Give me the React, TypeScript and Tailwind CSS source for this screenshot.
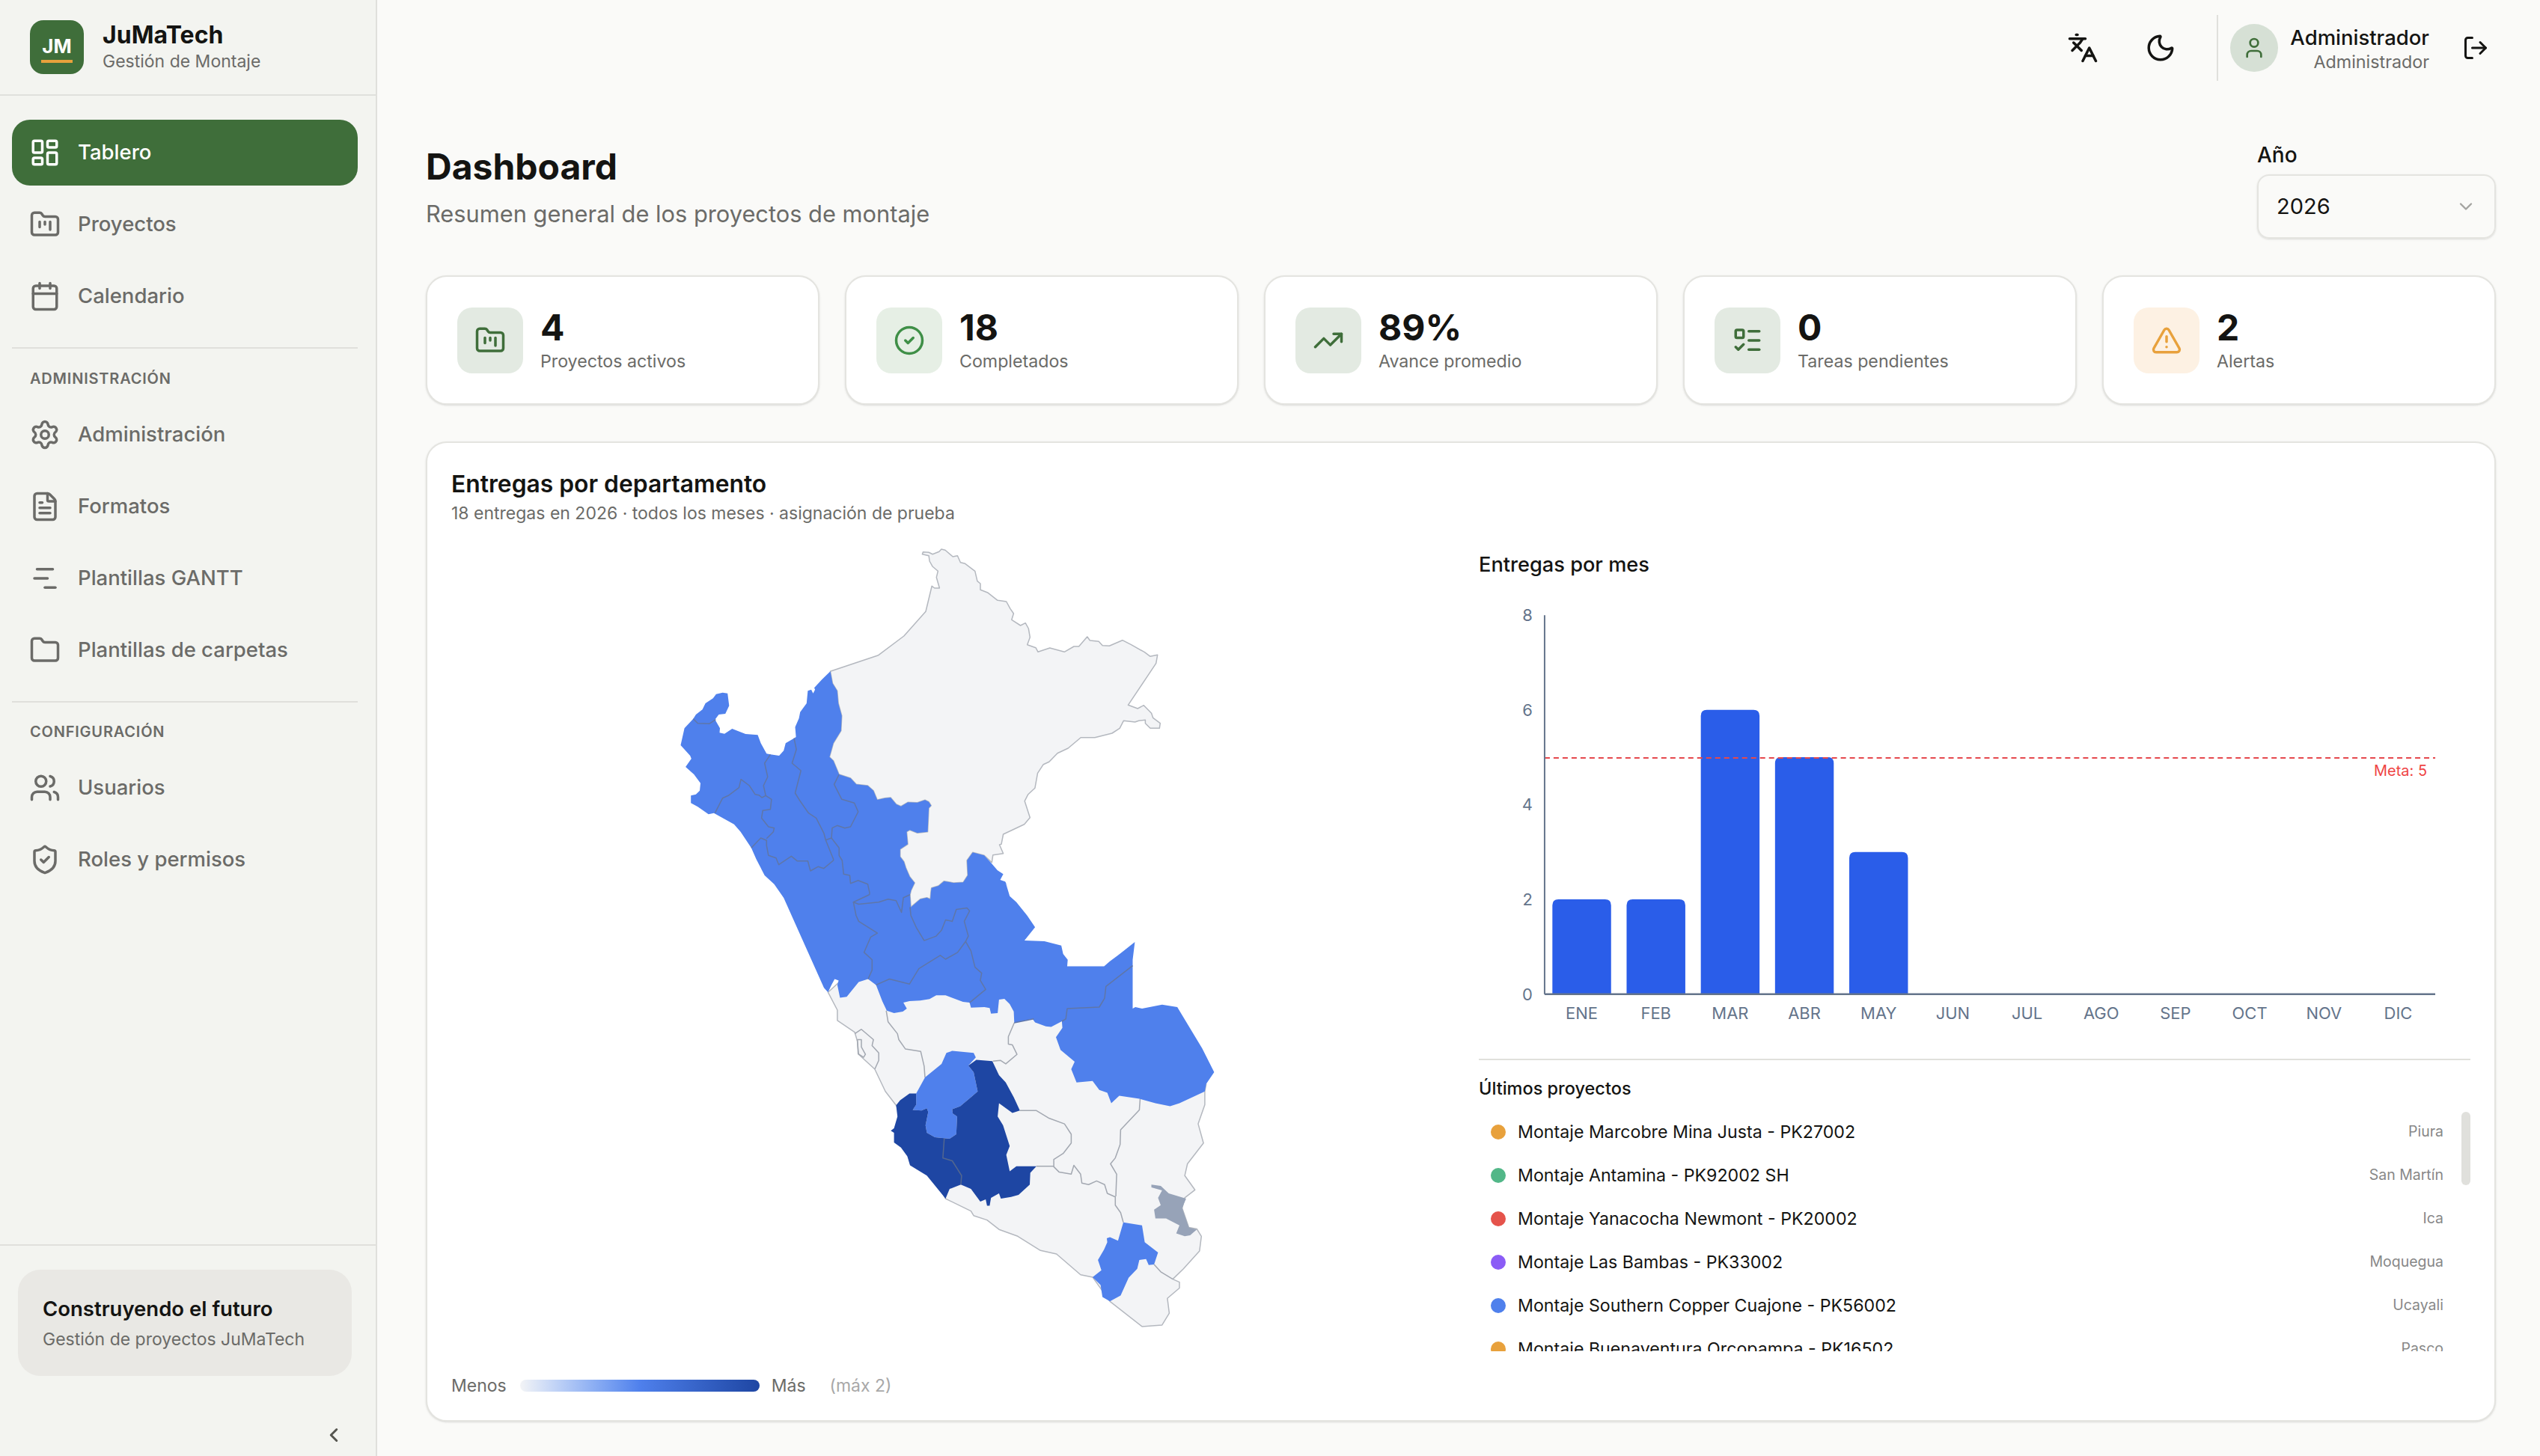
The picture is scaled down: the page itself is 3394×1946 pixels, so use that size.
import {
  Calendar,
  ChartNoAxesGantt,
  ChevronDown,
  ChevronLeft,
  CircleCheck,
  FileText,
  Folder,
  FolderKanban,
  Languages,
  LayoutDashboard,
  ListTodo,
  LogOut,
  Moon,
  Settings,
  ShieldCheck,
  TrendingUp,
  TriangleAlert,
  User,
  Users,
} from "lucide-react"

// the map was traced from two crops, so points come in two scales
type Seg = [7 | 8, string]

const toPage = (segs: Seg[], close = true) => {
  const pts: string[] = []
  for (const [z, str] of segs) {
    for (const p of str.trim().split(/\s+/)) {
      const [a, b] = p.split(",").map(Number)
      const x = z === 7 ? 860 + a / 1.96 : 1100 + a / 2.8
      const y = z === 7 ? 700 + b / 3 : 1180 + b / 2.53
      pts.push(`${x.toFixed(1)} ${y.toFixed(1)}`)
    }
  }
  return "M" + pts.join("L") + (close ? "Z" : "")
}

const LORETO: Seg[] = [
  [7, "487,592 613,527 680,450 737,352 753,250 760,258 773,258 765,215 769,190 755,172 747,150 745,128 728,122 730,113 745,115 755,122 772,112 778,102 788,106 808,132 820,128 828,155 840,160 866,190 872,230 880,240 880,265 900,277 925,307 948,312 958,340 967,360 962,385 985,408 998,398 1006,420 1010,455 1003,485 1025,497 1031,514 1062,498 1100,514 1125,492 1138,492 1160,453 1167,468 1190,472 1200,488 1218,490 1252,467 1275,485 1310,515 1325,532 1344,526 1340,560 1267,727 1292,741 1308,728 1328,760 1332,778 1351,800 1349,820 1325,820 1312,800 1312,787 1295,790 1285,795 1255,790 1245,820 1225,840 1180,857 1143,857 1110,900 1082,920 1060,955 1045,965 1030,1000 1023,1060 1005,1085 996,1112 1010,1178 995,1205 940,1245 935,1285 930,1287 940,1322 913,1328 910,1358 890,1330 860,1318 845,1350 847,1410 835,1438 810,1440 785,1433 770,1452 752,1460"],
  [8, "400,30 398,55 385,50 360,55 325,82 322,40 330,10"],
  [7, "697,1475 708,1440 695,1415 685,1380 680,1355 670,1335 670,1305 690,1285 687,1235 695,1228 715,1240 742,1235 745,1140 751,1130 745,1115 735,1108 715,1118 690,1117 672,1133 660,1125 645,1098 630,1100 610,1107 600,1070 585,1050 555,1045 540,1020 510,1005 495,950 485,935 495,880 515,830 517,770 508,720 505,670 493,640"],
]

const SOUTH: Seg[] = [
  [8, "15,370 50,430 50,465 115,505 125,535 130,580 190,630 230,705 270,752 455,1068 550,1110 560,1125 610,1140 655,1172 725,1195 810,1243 870,1255 960,1325 1005,1333 1070,1415 1190,1500 1265,1495 1292,1455 1285,1405 1330,1370 1330,1350 1305,1340 1345,1305 1405,1245 1412,1195 1395,1170 1365,1165 1340,1100 1350,1065 1388,1038 1350,990 1360,950 1420,880 1400,815 1425,750 1425,705 1430,680 1300,600 800,300 300,300 100,300"],
]

const NORTH_BLUE: Seg[] = [
  [7, "487,592 465,625 445,658 447,665 442,680 437,665 428,670 425,720 408,755 405,780 395,815 397,855 392,860 370,880 365,910 353,930 330,925 320,922 305,880 297,847 265,843 230,822 210,842 197,838 198,820 185,785 195,765 212,762 222,730 218,680 205,677 188,683 180,700 160,720 152,745 135,765 128,782 105,820 95,888 120,930 123,942 108,975 130,1005 147,1040 145,1070 135,1085 122,1090 122,1120 140,1135 168,1165 182,1160 235,1205 252,1235 280,1300 293,1345 315,1410 340,1445 365,1500"],
  [8, "0,355 15,370 28,345 40,325 55,330 50,345 60,388 85,385 130,335 165,325 195,345 218,400 235,432 262,440 295,435 310,425 297,405 320,400 360,398 395,393 420,380 455,380 520,402 545,405 550,422 600,420 620,423 625,442 650,440 655,395 675,392 695,410 710,435 712,473 780,460 790,472 830,485 850,487 890,468 892,490 868,522 885,565 938,605 925,630 945,675 1005,670 1030,700 1060,710 1075,745 1105,720 1180,730 1240,745 1295,755 1330,745 1425,705 1430,680 1460,640 1415,560 1322,420 1265,412 1190,425 1165,420 1155,425 1155,260 1163,200 1100,245 1070,265 1048,282 910,282 912,260 895,240 888,212 825,197 750,195 790,150 760,110 720,65 695,45 680,0"],
  [7, "955,1460 945,1435 932,1428 940,1405 925,1390 908,1360 890,1330 860,1318 845,1350 847,1410 835,1438 810,1440 785,1433 770,1452 752,1460"],
  [8, "400,30 398,55 385,50 360,55 325,82 322,40 330,10"],
  [7, "697,1475 708,1440 695,1415 685,1380 680,1355 670,1335 670,1305 690,1285 687,1235 695,1228 715,1240 742,1235 745,1140 751,1130 745,1115 735,1108 715,1118 690,1117 672,1133 660,1125 645,1098 630,1100 610,1107 600,1070 585,1050 555,1045 540,1020 510,1005 495,950 485,935 495,880 515,830 517,770 508,720 505,670 493,640"],
]

const MID_BLUE: Seg[] = [
  [8, "378,658 440,612 458,575 480,568 560,575 568,590 540,618 560,640 575,705 550,725 510,755 480,765 482,780 498,790 495,850 470,865 415,860 385,845 380,820 390,775 385,762 365,770 332,768 345,750 345,712"],
]

const DARK: Seg[] = [
  [8, "270,752 285,735 320,712 345,712 345,750 332,768 365,770 385,762 390,775 380,820 385,845 415,860 470,865 495,850 498,790 482,780 480,765 510,755 550,725 575,705 560,640 540,618 570,598 630,603 655,650 680,675 710,725 733,770 705,778 655,745 650,790 670,820 695,890 682,920 695,975 720,958 795,958 772,980 770,1020 728,1055 700,1062 662,1068 655,1050 625,1065 620,1092 610,1092 605,1070 585,1078 550,1035 512,1020 470,1035 455,1068 430,1040 385,990 322,955 312,925 288,895 262,878 262,845 250,838 262,830 275,790"],
]

const SOUTH_BLUE: Seg[] = [
  [8, "1120,1148 1190,1158 1200,1215 1250,1250 1235,1290 1215,1292 1205,1272 1180,1275 1172,1305 1140,1335 1110,1395 1070,1415 1042,1400 1035,1360 1005,1333 1038,1310 1025,1275 1048,1240 1060,1215 1058,1202 1070,1198 1100,1210"],
]

const GREY: Seg[] = [
  [8, "1225,1020 1260,1025 1290,1050 1355,1068 1340,1100 1365,1165 1395,1172 1370,1192 1350,1195 1318,1185 1330,1158 1280,1135 1240,1135 1235,1105 1260,1090 1250,1065 1265,1040 1225,1030"],
]

const BLUE_LINES: Seg[][] = [
  [[7, "128,782 140,800 170,802 187,785"]],
  [[7, "392,860 398,905 387,960 410,990 395,1080 407,1110 430,1160 450,1180 470,1240 475,1268 495,1345 495,1350 470,1382 455,1375 435,1392 428,1352 400,1352 385,1333 352,1367 345,1340 325,1330 320,1290 320,1270 305,1260 280,1300"]],
  [[7, "330,925 315,960 323,1015 312,1050 318,1090 333,1105 330,1145 310,1150 307,1180 325,1215 340,1220 338,1235 320,1262"]],
  [[7, "318,1090 308,1098 300,1088 290,1085 275,1050 253,1025 248,1058 220,1090 205,1100 185,1160"]],
  [[7, "510,1005 497,1045 517,1105 550,1120 560,1155 540,1215 525,1220 505,1210 492,1220 490,1260 475,1268"]],
  [[7, "490,1260 510,1300 510,1330 518,1350 522,1405 538,1410 540,1442 560,1430 585,1445 590,1480"], [8, "170,40 110,65 130,72 205,65 240,55 270,60 290,100 297,50 322,40"]],
  [[8, "110,65 120,110 130,130 200,170 175,183 150,235 180,260 180,295 165,325"]],
  [[8, "195,345 245,325 320,342 355,290 435,245 455,258 500,235 530,198 540,180 525,130 545,95 535,85 495,90 480,130 455,125 440,160 420,180 375,195 345,150 325,110 322,82"]],
  [[8, "530,198 550,230 565,285 590,305 585,330 605,360 545,405"]],
  [[8, "712,473 785,460"]],
  [[8, "890,468 905,460 910,425 1030,420 1050,390 1055,350 1155,280"]],
]

const LIGHT_LINES: Seg[][] = [
  [[8, "233,432 240,470 275,510 280,530 305,562 362,570 375,620 378,658"]],
  [[8, "712,473 690,520 690,545 705,548 722,580 680,612 660,600 632,603"]],
  [[8, "115,510 140,495 185,530 180,550 205,575 205,600 190,630"]],
  [[8, "125,530 140,530 140,555 155,580 148,590 128,578 125,530"]],
  [[8, "733,770 795,770 840,795 900,815 925,850 925,880 895,915 860,935 860,960 880,978 925,985 935,955 960,985 965,1015 990,1020 1020,1008 1050,1020 1060,1050 1090,1062 1090,1090 1110,1115 1120,1148"]],
  [[8, "860,958 795,958"]],
  [[8, "1183,730 1180,768 1110,835 1108,885 1090,930 1072,950 1095,985 1092,1060"]],
  [[8, "1235,1290 1260,1315 1305,1340"]],
]

function PeruMap() {
  return (
    <svg viewBox="860 720 800 1080" className="mx-auto block h-[1080px] w-[800px]">
      <path d={toPage(SOUTH)} fill="#f3f4f6" stroke="#b4b8bf" strokeWidth="1.5" strokeLinejoin="round" />
      <path d={toPage(LORETO)} fill="#f3f4f6" stroke="#b4b8bf" strokeWidth="1.5" strokeLinejoin="round" />
      {LIGHT_LINES.map((l, i) => (
        <path key={i} d={toPage(l, false)} fill="none" stroke="#a3a8b1" strokeWidth="1.5" strokeLinejoin="round" />
      ))}
      <path d={toPage(NORTH_BLUE)} fill="#4f80ec" />
      <path d={toPage(MID_BLUE)} fill="#4f80ec" />
      <path d={toPage(SOUTH_BLUE)} fill="#4f80ec" />
      <path d={toPage(DARK)} fill="#1e46a3" />
      <path d={toPage(GREY)} fill="#97a3b8" />
      {BLUE_LINES.map((l, i) => (
        <path key={i} d={toPage(l, false)} fill="none" stroke="#5f76a8" strokeWidth="1.5" strokeLinejoin="round" />
      ))}
      <path d={toPage([[8, "450,865 445,930 480,940 515,990 512,1020"]], false)} fill="none" stroke="#53678f" strokeWidth="1.5" />
    </svg>
  )
}

const MONTHS = ["ENE", "FEB", "MAR", "ABR", "MAY", "JUN", "JUL", "AGO", "SEP", "OCT", "NOV", "DIC"]
const DELIVERIES = [2, 2, 6, 5, 3, 0, 0, 0, 0, 0, 0, 0]

function MonthChart() {
  const left = 2064
  const base = 1329
  const step = 99.25
  const unit = 63.4
  return (
    <svg viewBox="1976 790 1326 600" className="block h-[600px] w-full">
      {[0, 2, 4, 6, 8].map((v) => (
        <text key={v} x={2048} y={base - v * unit + 8} textAnchor="end" fontSize="22" fill="#64748b">
          {v}
        </text>
      ))}
      {DELIVERIES.map((v, i) =>
        v > 0 ? (
          <path
            key={i}
            d={`M${left + 10.4 + i * step} ${base}v${-(v * unit - 8)}q0 -8 8 -8h62.5q8 0 8 8v${v * unit - 8}z`}
            fill="#2a5de9"
          />
        ) : null
      )}
      <line x1={left} x2={3255} y1={1013} y2={1013} stroke="#e5484d" strokeWidth="2" strokeDasharray="7 5" />
      <text x={3244} y={1037} textAnchor="end" fontSize="20" fill="#ef4444">
        Meta: 5
      </text>
      <line x1={left} x2={left} y1={822} y2={base} stroke="#64748b" strokeWidth="2" />
      <line x1={left} x2={3255} y1={base} y2={base} stroke="#64748b" strokeWidth="2.5" />
      {MONTHS.map((m, i) => (
        <text key={m} x={left + step / 2 + i * step} y={1362} textAnchor="middle" fontSize="22" fill="#64748b">
          {m}
        </text>
      ))}
    </svg>
  )
}

const NAV_TOP = [
  { label: "Tablero", icon: LayoutDashboard, active: true },
  { label: "Proyectos", icon: FolderKanban },
  { label: "Calendario", icon: Calendar },
]
const NAV_ADMIN = [
  { label: "Administración", icon: Settings },
  { label: "Formatos", icon: FileText },
  { label: "Plantillas GANTT", icon: ChartNoAxesGantt },
  { label: "Plantillas de carpetas", icon: Folder },
]
const NAV_CONFIG = [
  { label: "Usuarios", icon: Users },
  { label: "Roles y permisos", icon: ShieldCheck },
]

function NavItem({ label, icon: Icon, active }: { label: string; icon: typeof Folder; active?: boolean }) {
  return (
    <div
      className={
        active
          ? "flex h-[88px] items-center gap-[23px] rounded-[24px] bg-[#3f6e3a] pl-[23px] text-white"
          : "flex h-[88px] items-center gap-[23px] rounded-[24px] pl-[23px] text-[#6b6b68]"
      }
    >
      <Icon size={42} strokeWidth={2} />
      <span className="text-[27.5px] font-medium">{label}</span>
    </div>
  )
}

const STATS = [
  { value: "4", label: "Proyectos activos", icon: FolderKanban, box: "bg-[#e3eae2]", color: "text-[#3f6e3a]" },
  { value: "18", label: "Completados", icon: CircleCheck, box: "bg-[#e6efe5]", color: "text-[#3f8f47]" },
  { value: "89%", label: "Avance promedio", icon: TrendingUp, box: "bg-[#e3eae2]", color: "text-[#3f6e3a]" },
  { value: "0", label: "Tareas pendientes", icon: ListTodo, box: "bg-[#e3eae2]", color: "text-[#3f6e3a]" },
  { value: "2", label: "Alertas", icon: TriangleAlert, box: "bg-[#fdf1e3]", color: "text-[#e8a13c]" },
]

const PROJECTS = [
  { name: "Montaje Marcobre Mina Justa - PK27002", place: "Piura", dot: "bg-[#e8a13c]" },
  { name: "Montaje Antamina - PK92002 SH", place: "San Martín", dot: "bg-[#52b788]" },
  { name: "Montaje Yanacocha Newmont - PK20002", place: "Ica", dot: "bg-[#e5534b]" },
  { name: "Montaje Las Bambas - PK33002", place: "Moquegua", dot: "bg-[#8b5cf6]" },
  { name: "Montaje Southern Copper Cuajone - PK56002", place: "Ucayali", dot: "bg-[#4f80ec]" },
  { name: "Montaje Buenaventura Orcopampa - PK16502", place: "Pasco", dot: "bg-[#e8a13c]" },
]

export default function App() {
  return (
    <div className="flex h-[1946px] w-[3394px] overflow-hidden bg-[#fafaf8] font-['Inter',sans-serif] text-[#141412]">
      <aside className="flex h-full w-[504px] shrink-0 flex-col border-r-2 border-[#e0e0dc] bg-[#f3f4f0]">
        <div className="flex h-[128px] shrink-0 items-center gap-[25px] border-b-2 border-[#e0e0dc] pl-[40px]">
          <div className="flex h-[72px] w-[72px] flex-col items-center justify-center rounded-[18px] bg-[#3f6e3a] pt-[6px]">
            <span className="text-[26px] leading-[28px] font-bold text-white">JM</span>
            <span className="mt-[4px] h-[4px] w-[42px] bg-[#e8a13c]" />
          </div>
          <div>
            <div className="text-[32px] leading-[38px] font-bold">JuMaTech</div>
            <div className="text-[23px] leading-[32px] text-[#6b6b68]">Gestión de Montaje</div>
          </div>
        </div>

        <nav className="flex flex-1 flex-col pl-[16px] pr-[24px] pt-[32px]">
          <div className="flex flex-col gap-[8px]">
            {NAV_TOP.map((n) => (
              <NavItem key={n.label} {...n} />
            ))}
          </div>
          <div className="mt-[24px] border-t-2 border-[#e0e0dc]" />
          <div className="mt-[27px] pl-[24px] text-[20px] leading-[26px] font-semibold tracking-[0.8px] text-[#6b6b68]">
            ADMINISTRACIÓN
          </div>
          <div className="mt-[18px] flex flex-col gap-[8px]">
            {NAV_ADMIN.map((n) => (
              <NavItem key={n.label} {...n} />
            ))}
          </div>
          <div className="mt-[24px] border-t-2 border-[#e0e0dc]" />
          <div className="mt-[26px] pl-[24px] text-[20px] leading-[26px] font-semibold tracking-[0.8px] text-[#6b6b68]">
            CONFIGURACIÓN
          </div>
          <div className="mt-[18px] flex flex-col gap-[8px]">
            {NAV_CONFIG.map((n) => (
              <NavItem key={n.label} {...n} />
            ))}
          </div>
        </nav>

        <div className="relative h-[283px] shrink-0 border-t-2 border-[#e0e0dc] pl-[24px] pr-[32px] pt-[32px]">
          <div className="h-[142px] rounded-[30px] bg-[#e9e8e4] pl-[33px] pt-[33px]">
            <div className="text-[27.5px] leading-[38px] font-semibold">Construyendo el futuro</div>
            <div className="mt-[6px] text-[23px] leading-[32px] text-[#6b6b68]">Gestión de proyectos JuMaTech</div>
          </div>
          <ChevronLeft size={30} className="absolute bottom-[13px] right-[41px] text-[#55554f]" strokeWidth={2.4} />
        </div>
      </aside>

      <div className="flex min-w-0 flex-1 flex-col">
        <header className="flex h-[128px] shrink-0 items-center justify-end pr-[68px]">
          <Languages size={42} className="mr-[62px] text-[#141412]" strokeWidth={2} />
          <Moon size={42} className="mr-[54px] text-[#141412]" strokeWidth={2} />
          <div className="mr-[16px] h-[88px] w-[2px] bg-[#e0e0dc]" />
          <div className="mr-[16px] flex h-[64px] w-[64px] items-center justify-center rounded-full bg-[#d6e0d5]">
            <User size={32} className="text-[#3f6e3a]" strokeWidth={2} />
          </div>
          <div className="mr-[44px] pt-[3px] text-right">
            <div className="text-[27.5px] leading-[34px] font-medium">Administrador</div>
            <div className="text-[23.3px] leading-[32px] text-[#6b6b68]">Administrador</div>
          </div>
          <LogOut size={36} className="text-[#141412]" strokeWidth={2} />
        </header>

        <main className="flex flex-1 flex-col pl-[65px] pr-[59px] pt-[60px]">
          <div className="flex items-start justify-between">
            <div className="pt-[5px]">
              <h1 className="text-[48px] leading-[60px] font-bold">Dashboard</h1>
              <p className="mt-[11px] text-[30.8px] leading-[44px] text-[#6b6b68]">
                Resumen general de los proyectos de montaje
              </p>
            </div>
            <div className="w-[319px]">
              <div className="pt-[2px] text-[28px] leading-[34px] font-medium">Año</div>
              <div className="mt-[9px] flex h-[86px] items-center justify-between rounded-[16px] border-2 border-[#e4e4e0] px-[24px] shadow-sm">
                <span className="text-[29px]">2026</span>
                <ChevronDown size={28} className="text-[#a3a3a0]" strokeWidth={2} />
              </div>
            </div>
          </div>

          <div className="mt-[49px] grid grid-cols-5 gap-[34px]">
            {STATS.map((s) => (
              <div
                key={s.label}
                className="flex h-[173px] items-center gap-[23px] rounded-[28px] border-2 border-[#e4e4e0] bg-white pl-[40px] shadow-sm"
              >
                <div className={`flex h-[88px] w-[88px] items-center justify-center rounded-[20px] ${s.box}`}>
                  <s.icon size={42} className={s.color} strokeWidth={2} />
                </div>
                <div>
                  <div className="text-[48px] leading-[54px] font-bold">{s.value}</div>
                  <div className="pt-[2px] text-[23.2px] leading-[32px] text-[#6b6b68]">{s.label}</div>
                </div>
              </div>
            ))}
          </div>

          <section className="mt-[49px] h-[1310px] rounded-[28px] border-2 border-[#e4e4e0] bg-white px-[32px] pt-[35px] shadow-sm">
            <h2 className="text-[31.8px] leading-[40px] font-semibold">Entregas por departamento</h2>
            <p className="mt-[2px] text-[23px] leading-[34px] text-[#6b6b68]">
              18 entregas en 2026 · todos los meses · asignación de prueba
            </p>

            <div className="mt-[17px] grid grid-cols-[1315px_1fr] gap-[58px]">
              <div>
                <PeruMap />
                <div className="mt-[34px] flex h-[36px] items-center text-[23px] text-[#6b6b68]">
                  <span>Menos</span>
                  <span className="ml-[18px] h-[16px] w-[320px] rounded-full bg-linear-to-r from-[#f3f4f6] via-[#4f80ec] to-[#1e46a3]" />
                  <span className="ml-[16px]">Más</span>
                  <span className="ml-[32px] text-[#a8a8a8]">(máx 2)</span>
                </div>
              </div>

              <div className="flex flex-col">
                <div className="pt-[18px] text-[27.2px] leading-[34px] font-medium">Entregas por mes</div>
                <div className="mt-[18px]">
                  <MonthChart />
                </div>
                <div className="mt-[25px] border-t-2 border-[#e0e0dc] pt-[20px] text-[23.5px] leading-[36px] font-medium">
                  Últimos proyectos
                </div>
                <div className="relative mt-[11px] h-[322px] overflow-hidden">
                  <div className="flex flex-col">
                    {PROJECTS.map((p) => (
                      <div key={p.name} className="flex h-[58px] shrink-0 items-center pl-[16px] pr-[36px]">
                        <span className={`h-[20px] w-[20px] shrink-0 rounded-full ${p.dot}`} />
                        <span className="ml-[16px] flex-1 text-[23.2px]">{p.name}</span>
                        <span className="text-[19.5px] text-[#888888]">{p.place}</span>
                      </div>
                    ))}
                  </div>
                  <div className="absolute right-0 top-[2px] h-[98px] w-[12px] rounded-full bg-[#e0e0dc]" />
                </div>
              </div>
            </div>
          </section>
        </main>
      </div>
    </div>
  )
}
